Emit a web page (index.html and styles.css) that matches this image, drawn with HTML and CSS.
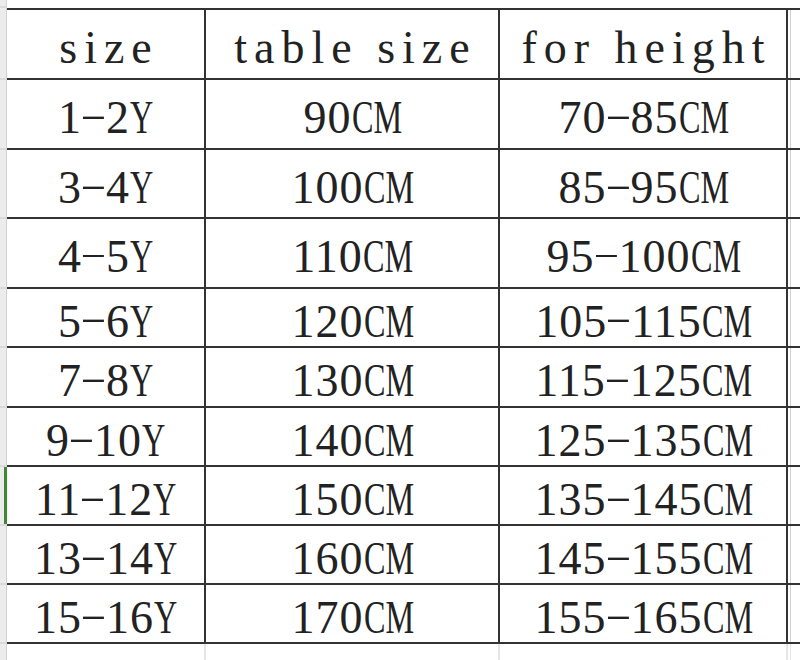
FILE: index.html
```html
<!DOCTYPE html>
<html>
<head>
<meta charset="utf-8">
<link rel="stylesheet" href="styles.css">
</head>
<body>
<div class="sheet">
  <div class="rh"></div><div class="top"></div>

  <div class="rh"></div>
  <div class="c hd"><span class="hw">size</span></div>
  <div class="c hd"><span class="hw">table size</span></div>
  <div class="c hd"><span class="hw">for height</span></div>
  <div class="x hd"></div>

  <div class="rh"></div>
  <div class="c">1<span class="d">-</span>2<span class="n y">Y</span></div>
  <div class="c">90<span class="n cm">CM</span></div>
  <div class="c">70<span class="d">-</span>85<span class="n cm">CM</span></div>
  <div class="x"></div>

  <div class="rh"></div>
  <div class="c">3<span class="d">-</span>4<span class="n y">Y</span></div>
  <div class="c">100<span class="n cm">CM</span></div>
  <div class="c">85<span class="d">-</span>95<span class="n cm">CM</span></div>
  <div class="x"></div>

  <div class="rh"></div>
  <div class="c">4<span class="d">-</span>5<span class="n y">Y</span></div>
  <div class="c">110<span class="n cm">CM</span></div>
  <div class="c">95<span class="d">-</span>100<span class="n cm">CM</span></div>
  <div class="x"></div>

  <div class="rh"></div>
  <div class="c">5<span class="d">-</span>6<span class="n y">Y</span></div>
  <div class="c">120<span class="n cm">CM</span></div>
  <div class="c">105<span class="d">-</span>115<span class="n cm">CM</span></div>
  <div class="x"></div>

  <div class="rh"></div>
  <div class="c">7<span class="d">-</span>8<span class="n y">Y</span></div>
  <div class="c">130<span class="n cm">CM</span></div>
  <div class="c">115<span class="d">-</span>125<span class="n cm">CM</span></div>
  <div class="x"></div>

  <div class="rh"></div>
  <div class="c">9<span class="d">-</span>10<span class="n y">Y</span></div>
  <div class="c">140<span class="n cm">CM</span></div>
  <div class="c">125<span class="d">-</span>135<span class="n cm">CM</span></div>
  <div class="x"></div>

  <div class="rh sel"></div>
  <div class="c">11<span class="d">-</span>12<span class="n y">Y</span></div>
  <div class="c">150<span class="n cm">CM</span></div>
  <div class="c">135<span class="d">-</span>145<span class="n cm">CM</span></div>
  <div class="x"></div>

  <div class="rh"></div>
  <div class="c">13<span class="d">-</span>14<span class="n y">Y</span></div>
  <div class="c">160<span class="n cm">CM</span></div>
  <div class="c">145<span class="d">-</span>155<span class="n cm">CM</span></div>
  <div class="x"></div>

  <div class="rh"></div>
  <div class="c">15<span class="d">-</span>16<span class="n y">Y</span></div>
  <div class="c">170<span class="n cm">CM</span></div>
  <div class="c">155<span class="d">-</span>165<span class="n cm">CM</span></div>
  <div class="x"></div>

  <div class="rh last"></div>
  <div class="t"></div>
  <div class="t"></div>
  <div class="t"></div>
  <div class="tx"></div>
</div>
</body>
</html>
```

FILE: styles.css
```css
* { box-sizing: border-box; }
html, body {
  margin: 0;
  padding: 0;
  background: #ffffff;
  overflow: hidden;
}
.sheet {
  width: 800px;
  height: 660px;
  display: grid;
  grid-template-columns: 7px 199px 294px 288px 12px;
  grid-template-rows: 8px 72px 70px 69px 70px 59px 60px 59px 59px 59px 59px 16px;
  font-family: "Liberation Serif", "Times New Roman", serif;
  font-size: 46px;
  color: #222222;
}
.rh {
  background: linear-gradient(to right, #ececec 6px, #d2d2d2 6px);
  border-bottom: 2px solid #dadada;
}
.rh.last { border-bottom: none; }
.rh.sel {
  background: linear-gradient(to right, #ececec 4px, #3b8a30 4px);
}
.top {
  grid-column: span 4;
}
.c {
  display: flex;
  align-items: center;
  justify-content: center;
  padding-top: 8px;
  border-right: 2px solid #333333;
  border-bottom: 2px solid #333333;
  white-space: nowrap;
  letter-spacing: 1px;
  line-height: 1;
}
.hd { border-top: 2px solid #333333; }
.hw {
  letter-spacing: 7px;
  padding-left: 7px;
}
.x {
  border-bottom: 2px solid #333333;
  background: linear-gradient(to right, #ffffff 2px, #d0d0d0 2px, #d0d0d0 3px, #ffffff 3px);
}
.t {
  border-right: 2px solid #e6e6e6;
}
.tx {
  background: linear-gradient(to right, #ffffff 2px, #e6e6e6 2px, #e6e6e6 3px, #ffffff 3px);
}
.d {
  display: inline-block;
  width: 23px;
  text-align: center;
  letter-spacing: 0;
  margin-right: 1px;
  transform: translateY(-4px) scale(1.75, 0.7);
}
.n {
  display: inline-block;
  transform-origin: left center;
  transform: scaleX(0.7);
  letter-spacing: 0;
}
.n.y { width: 23px; }
.n.cm { width: 49px; }
```
